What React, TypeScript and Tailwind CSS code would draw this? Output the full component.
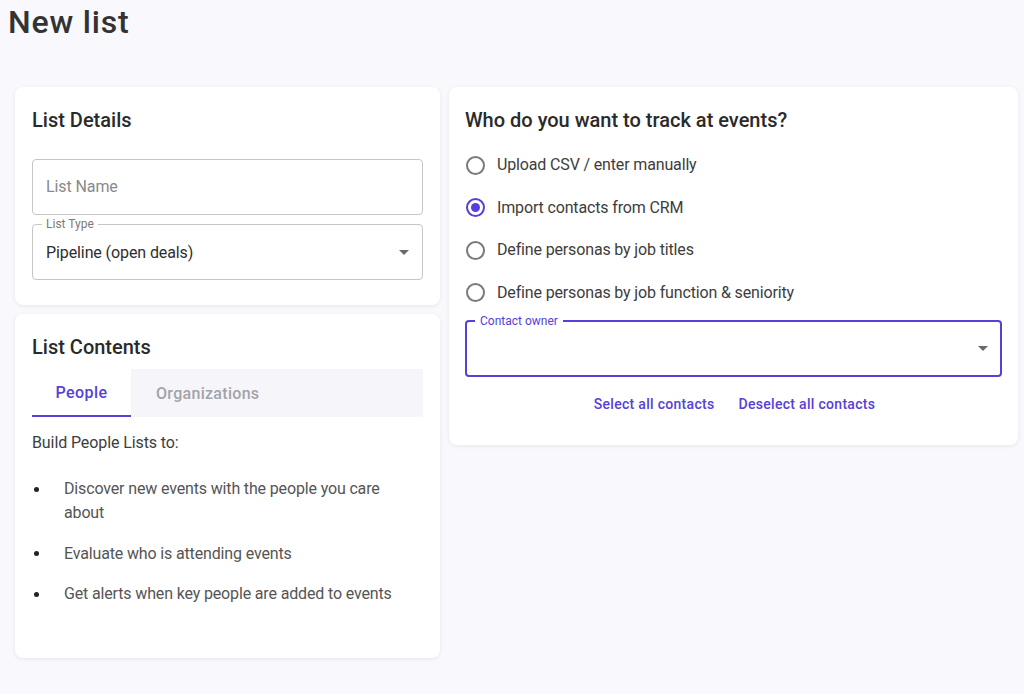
const PURPLE = 'text-[#5541d9]';

function Caret() {
  return (
    <svg width="10" height="5" viewBox="0 0 10 5" className="shrink-0">
      <path d="M0 0l5 5 5-5z" fill="#6b6b6b" />
    </svg>
  );
}

function Radio({ label, checked }: { label: string; checked?: boolean }) {
  return (
    <label className="flex h-[42.5px] items-center gap-[12px]">
      <span
        className={`ml-[1px] flex h-[19px] w-[19px] items-center justify-center rounded-full border-2 ${
          checked ? 'border-[#5541d9]' : 'border-[#7a7a7a]'
        }`}
      >
        {checked && <span className="h-[9px] w-[9px] rounded-full bg-[#5541d9]" />}
      </span>
      <span className="text-[16px] tracking-[-0.15px] text-[#3d3d3d]">{label}</span>
    </label>
  );
}

const bullets = [
  'Discover new events with the people you care about',
  'Evaluate who is attending events',
  'Get alerts when key people are added to events',
];

export default function App() {
  return (
    <div className="min-h-[694px] bg-[#f8f8fd] font-['Roboto',sans-serif] text-[#2b2b2b]">
      <h1 className="pl-[8px] pt-[2px] text-[32px] font-medium leading-[40px] tracking-[0.8px] text-[#333]">New list</h1>

      <div className="mt-[45px] grid grid-cols-[425px_569px] gap-[9px] pl-[15px]">
        <div className="flex flex-col gap-[9px]">
          <section className="rounded-lg bg-white px-[17px] pb-[25px] pt-[19px] shadow-[0_1px_4px_rgba(0,0,0,0.08)]">
            <h2 className="text-[20px] font-medium leading-[28px] text-[#2a2a2a]">List Details</h2>
            <div className="mt-[25px] flex h-[56px] items-center rounded border border-[#c6c6c6] px-[13px] text-[16px] tracking-[-0.1px] text-[#8a8a8a]">
              List Name
            </div>
            <div className="relative mt-[9px] flex h-[56px] items-center justify-between rounded border border-[#c6c6c6] pl-[13px] pr-[13px]">
              <span className="absolute -top-[8px] left-[9px] bg-white px-[4px] text-[12px] leading-[14px] text-[#7a7a7a]">
                List Type
              </span>
              <span className="pt-[2px] text-[16px] tracking-[-0.1px] text-[#2e2e2e]">Pipeline (open deals)</span>
              <Caret />
            </div>
          </section>

          <section className="rounded-lg bg-white px-[17px] pb-[52px] pt-[19px] shadow-[0_1px_4px_rgba(0,0,0,0.08)]">
            <h2 className="text-[20px] font-medium leading-[28px] text-[#2a2a2a]">List Contents</h2>
            <div className="mt-[8px] flex h-[48px]">
              <div className={`flex w-[99px] items-center justify-center border-b-2 border-[#5541d9] pt-[2px] text-[16px] font-medium tracking-[0.4px] ${PURPLE}`}>
                People
              </div>
              <div className="flex flex-1 items-center bg-[#f5f5fa] pl-[25px] pt-[2px] text-[16px] font-medium tracking-[0.3px] text-[#a3a3a8]">
                Organizations
              </div>
            </div>
            <p className="mt-[14px] text-[16px] leading-[24px] tracking-[-0.1px] text-[#3d3d3d]">Build People Lists to:</p>
            <ul className="mt-[22px] flex flex-col gap-[16.5px]">
              {bullets.map((b) => (
                <li key={b} className="flex text-[16px] leading-[24px] tracking-[-0.15px] text-[#555]">
                  <span className="flex h-[24px] w-[32px] shrink-0 items-center pl-[2px]">
                    <span className="h-[5px] w-[5px] rounded-full bg-[#222]" />
                  </span>
                  <span className="pr-[28px]">{b}</span>
                </li>
              ))}
            </ul>
          </section>
        </div>

        <section className="self-start rounded-lg bg-white px-[16px] pb-[31px] pt-[19px] shadow-[0_1px_4px_rgba(0,0,0,0.08)]">
          <h2 className="text-[20px] font-medium leading-[28px] text-[#2a2a2a]">Who do you want to track at events?</h2>
          <div className="mt-[10px] flex flex-col">
            <Radio label="Upload CSV / enter manually" />
            <Radio label="Import contacts from CRM" checked />
            <Radio label="Define personas by job titles" />
            <Radio label="Define personas by job function & seniority" />
          </div>
          <div className="relative mt-[6px] flex h-[57px] items-center justify-end rounded border-2 border-[#5541d9] pr-[12px]">
            <span className={`absolute -top-[8px] left-[8px] bg-white px-[5px] text-[12px] leading-[14px] ${PURPLE}`}>
              Contact owner
            </span>
            <Caret />
          </div>
          <div className="mt-[17px] flex justify-center gap-[24px] pl-[2px] text-[14px] font-medium leading-[20px] tracking-[0.3px]">
            <span className={PURPLE}>Select all contacts</span>
            <span className={PURPLE}>Deselect all contacts</span>
          </div>
        </section>
      </div>
    </div>
  );
}
